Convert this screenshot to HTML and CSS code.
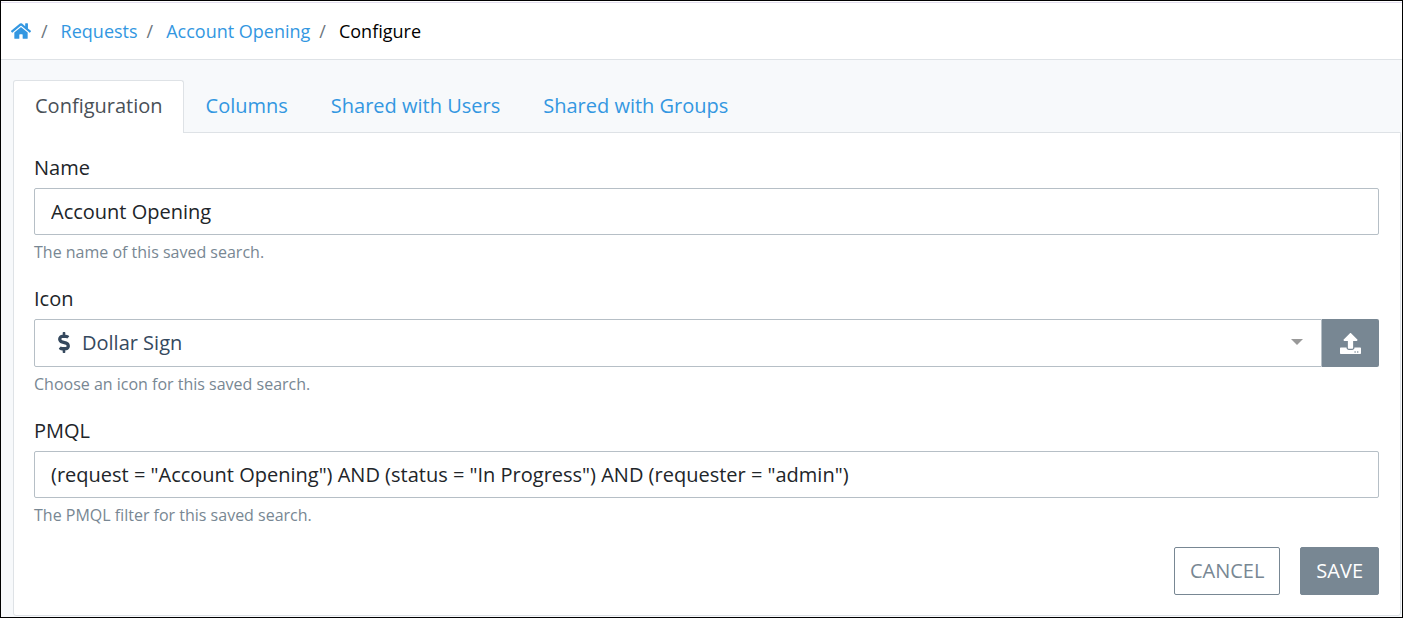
FILE: index.html
```html
<!DOCTYPE html>
<html lang="en">
<head>
<meta charset="utf-8">
<title>Configure Saved Search</title>
<link rel="stylesheet" href="styles.css">
</head>
<body>
<div class="page">
  <nav class="breadcrumb" aria-label="Breadcrumb">
    <a href="#" class="home" aria-label="Home"><svg viewBox="0 0 576 512" width="20" height="18"><path fill="currentColor" d="M280.4 148.3L96 300.1V464a16 16 0 0 0 16 16l112.1-.3a16 16 0 0 0 15.9-16V368a16 16 0 0 1 16-16h64a16 16 0 0 1 16 16v95.600a16 16 0 0 0 16 16.100L464 480a16 16 0 0 0 16-16V300L295.700 148.300a12.200 12.200 0 0 0-15.300 0zM571.600 251.500L488 182.600V44a12 12 0 0 0-12-12h-56a12 12 0 0 0-12 12v72.600L318.500 43a48 48 0 0 0-61 0L4.300 251.500a12 12 0 0 0-1.600 16.900l25.500 31a12 12 0 0 0 16.900 1.600L280.400 107.200a12.200 12.200 0 0 1 15.300 0L531 301a12 12 0 0 0 16.900-1.600l25.500-31a12 12 0 0 0-1.800-16.900z"/></svg></a>
    <span class="slash">/</span>
    <a href="#">Requests</a>
    <span class="slash">/</span>
    <a href="#">Account Opening</a>
    <span class="slash">/</span>
    <span class="current">Configure</span>
  </nav>
  <main class="content">
    <nav class="tabs">
      <a href="#" class="tab active">Configuration</a>
      <a href="#" class="tab">Columns</a>
      <a href="#" class="tab">Shared with Users</a>
      <a href="#" class="tab">Shared with Groups</a>
    </nav>
    <form class="card">
      <div class="group">
        <label for="name">Name</label>
        <input id="name" class="control" type="text" value="Account Opening">
        <small>The name of this saved search.</small>
      </div>
      <div class="group">
        <label for="icon">Icon</label>
        <div class="picker">
          <div class="select-wrap">
            <select id="icon" class="control select"><option>Dollar Sign</option></select>
            <svg class="dollar" viewBox="0 0 288 512" width="12" height="21"><path fill="currentColor" d="M209.200 233.400l-108-31.600C88.700 198.200 80 186.500 80 173.500c0-16.300 13.200-29.500 29.500-29.500h66.300c12.200 0 24.200 3.700 34.200 10.500 6.100 4.100 14.300 3.100 19.500-2l34.800-34c7.100-6.900 6.100-18.400-1.800-24.500C238 74.800 207.400 64.100 176 64V16c0-8.800-7.200-16-16-16h-32c-8.800 0-16 7.200-16 16v48h-2.500C45.800 64-5.400 118.700.5 183.600c4.200 46.100 39.400 83.600 83.800 96.600l102.500 30c12.500 3.700 21.200 15.300 21.200 28.300 0 16.300-13.200 29.500-29.500 29.500h-66.300C100 368 88 364.300 78 357.500c-6.100-4.100-14.300-3.100-19.500 2l-34.800 34c-7.100 6.900-6.100 18.400 1.800 24.500 24.500 19.200 55.100 29.900 86.500 30v48c0 8.800 7.200 16 16 16h32c8.800 0 16-7.200 16-16v-48.200c46.600-.9 90.300-28.600 105.700-72.700 21.500-61.600-14.600-124.800-72.500-141.700z"/></svg>
            <svg class="caret" viewBox="0 0 12 6" width="12" height="6"><path fill="#999" d="M0 0h12L6 6z"/></svg>
          </div>
          <button type="button" class="upload" aria-label="Upload icon"><svg viewBox="0 0 512 512" width="21" height="21"><path fill="currentColor" d="M296 384h-80c-13.300 0-24-10.700-24-24V192h-87.700c-17.800 0-26.700-21.500-14.100-34.100L242.300 5.700c7.500-7.500 19.800-7.500 27.300 0l152.200 152.200c12.600 12.600 3.700 34.100-14.100 34.100H320v168c0 13.300-10.700 24-24 24zm216-8v112c0 13.300-10.700 24-24 24H24c-13.300 0-24-10.700-24-24V376c0-13.300 10.700-24 24-24h136v8c0 30.900 25.100 56 56 56h80c30.900 0 56-25.100 56-56v-8h136c13.300 0 24 10.700 24 24zm-124 88c0-11-9-20-20-20s-20 9-20 20 9 20 20 20 20-9 20-20zm64 0c0-11-9-20-20-20s-20 9-20 20 9 20 20 20 20-9 20-20z"/></svg></button>
        </div>
        <small>Choose an icon for this saved search.</small>
      </div>
      <div class="group">
        <label for="pmql">PMQL</label>
        <input id="pmql" class="control" type="text" value="(request = &quot;Account Opening&quot;) AND (status = &quot;In Progress&quot;) AND (requester = &quot;admin&quot;)">
        <small>The PMQL filter for this saved search.</small>
      </div>
      <div class="actions">
        <button type="button" class="btn cancel">CANCEL</button>
        <button type="submit" class="btn save">SAVE</button>
      </div>
    </form>
  </main>
</div>
</body>
</html>
```
FILE: styles.css
```css
* {
  box-sizing: border-box;
}

body {
  margin: 0;
  font-family: "Open Sans", "Noto Sans", sans-serif;
  font-size: 20px;
  line-height: 28px;
  color: #212529;
  background: #f7f9fb;
}

a {
  color: #3397e1;
  text-decoration: none;
}

svg {
  display: block;
}

.page {
  min-height: 100vh;
  border: 1px solid #000;
  padding-top: 1px;
  background: linear-gradient(#fff, #fff) top / 100% 1px no-repeat #f7f9fb;
}

.breadcrumb {
  display: flex;
  align-items: center;
  height: 58px;
  padding: 0 10px;
  font-size: 18px;
  background: #fff;
  border-top: 1px solid #e4dff0;
  border-bottom: 1px solid #dee2e6;
}

.home {
  margin-right: 1px;
}

.slash {
  padding: 0 13px 0 9px;
  color: #6c757d;
}

.current {
  color: #000;
}

.content {
  padding: 20px 1px 1px 12px;
}

.tabs {
  display: flex;
}

.tab {
  padding: 11px 20px 12px 21px;
  border: 1px solid transparent;
  border-bottom: 0;
}

.tab.active {
  position: relative;
  margin-bottom: -1px;
  padding-bottom: 13px;
  color: #495057;
  background: #fff;
  border-color: #dee2e6;
  border-radius: 3px 3px 0 0;
}

.card {
  padding: 21px 21px 20px 20px;
  background: #fff;
  border: 1px solid #dee2e6;
  border-radius: 0 0 3px 3px;
}

.group {
  display: flex;
  flex-direction: column;
}

.group + .group {
  margin-top: 21px;
}

.group label {
  margin-bottom: 6px;
}

.group small {
  margin-top: 5px;
  font-size: 16px;
  line-height: 24px;
  color: #788793;
}

.control {
  width: 100%;
  height: 47px;
  padding: 0 16px;
  font: inherit;
  color: #212529;
  background: #fff;
  border: 1px solid #b6bfc6;
  border-radius: 2px;
}

.picker {
  display: flex;
  height: 48px;
}

.select-wrap {
  position: relative;
  flex: 1;
}

.select {
  height: 100%;
  padding-left: 47px;
  color: #35495e;
  appearance: none;
  border-radius: 2px 0 0 2px;
}

.dollar,
.caret {
  position: absolute;
  pointer-events: none;
}

.dollar {
  top: 13px;
  left: 24px;
  color: #35495e;
}

.caret {
  top: 20px;
  right: 19px;
}

.upload {
  display: grid;
  place-items: center;
  width: 57px;
  padding: 0;
  color: #fff;
  background: #788793;
  border: 0;
  border-radius: 0 2px 2px 0;
}

.actions {
  display: flex;
  justify-content: flex-end;
  gap: 20px;
  margin-top: 20px;
}

.btn {
  height: 48px;
  padding: 0 15px;
  font: inherit;
  border: 1px solid #788793;
  border-radius: 2px;
}

.cancel {
  color: #788793;
  background: #fff;
}

.save {
  color: #fff;
  background: #788793;
}
```
